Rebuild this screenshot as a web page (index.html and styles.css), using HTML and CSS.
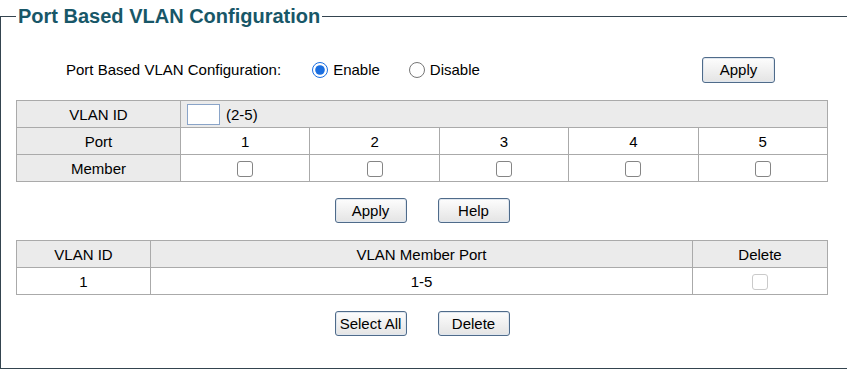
FILE: index.html
```html
<!DOCTYPE html>
<html lang="en">
<head>
  <meta charset="UTF-8" />
  <title>Port Based VLAN Configuration</title>
  <link rel="stylesheet" href="styles.css">
</head>
<body>
  <fieldset class="panel">
    <legend>Port Based VLAN Configuration</legend>

    <div class="config-row">
      <span class="config-label">Port Based VLAN Configuration:</span>
      <label class="radio"><input type="radio" name="state" checked> Enable</label>
      <label class="radio"><input type="radio" name="state"> Disable</label>
      <button type="button" class="btn apply-top">Apply</button>
    </div>

    <table class="grid member-table">
      <colgroup>
        <col style="width:164px"><col><col><col><col><col>
      </colgroup>
      <tr>
        <th>VLAN ID</th>
        <td colspan="5" class="id-cell"><input type="text" class="vid"><span class="hint">(2-5)</span></td>
      </tr>
      <tr>
        <th>Port</th>
        <td>1</td><td>2</td><td>3</td><td>4</td><td>5</td>
      </tr>
      <tr>
        <th>Member</th>
        <td><input type="checkbox" class="chk"></td>
        <td><input type="checkbox" class="chk"></td>
        <td><input type="checkbox" class="chk"></td>
        <td><input type="checkbox" class="chk"></td>
        <td><input type="checkbox" class="chk"></td>
      </tr>
    </table>

    <div class="btn-row">
      <button type="button" class="btn">Apply</button>
      <button type="button" class="btn">Help</button>
    </div>

    <table class="grid list-table">
      <colgroup>
        <col style="width:134px"><col><col style="width:135px">
      </colgroup>
      <tr><th>VLAN ID</th><th>VLAN Member Port</th><th>Delete</th></tr>
      <tr>
        <td>1</td>
        <td>1-5</td>
        <td><input type="checkbox" class="chk" disabled></td>
      </tr>
    </table>

    <div class="btn-row">
      <button type="button" class="btn">Select All</button>
      <button type="button" class="btn">Delete</button>
    </div>
  </fieldset>
</body>
</html>
```

FILE: styles.css
```css
body {
  margin: 0;
  font-family: 'Liberation Sans', Arial, sans-serif;
  font-size: 15px;
  color: #000;
  background: #fff;
}

.panel {
  margin: 5px 0 0 0;
  padding: 0 15px 32px 15px;
  border: 1px solid #34444f;
  border-right: none;
  min-width: 0;
}

.panel legend {
  padding: 0 2px;
  font-size: 20px;
  font-weight: bold;
  color: #185768;
}

.config-row {
  display: flex;
  align-items: center;
  height: 27px;
  margin-top: 28px;
  margin-bottom: 17px;
  padding-left: 50px;
  width: 709px;
}

.config-label {
  margin-right: 31px;
}

.radio {
  display: flex;
  align-items: center;
  gap: 5px;
  margin-right: 29px;
}

.radio input {
  width: 16px;
  height: 16px;
  margin: 0;
  accent-color: #1a6ee0;
}

.btn {
  width: 72px;
  height: 25px;
  padding: 0;
  font-family: 'Liberation Sans', Arial, sans-serif;
  font-size: 15px;
  color: #000;
  background: linear-gradient(#fdfdfd, #e4e4e4);
  border: 1px solid #4f6b8a;
  border-radius: 3px;
  box-shadow: inset 0 0 0 1px #dfe6ee;
  cursor: pointer;
}

.apply-top {
  margin-left: auto;
  width: 73px;
  height: 26px;
}

.grid {
  width: 812px;
  border-collapse: collapse;
  table-layout: fixed;
}

.grid th, .grid td {
  border: 1px solid #aaa;
  height: 26px;
  padding: 0;
  text-align: center;
  font-weight: normal;
}

.grid th {
  background: #ebebeb;
}

.grid .id-cell {
  text-align: left;
  padding-left: 6px;
  background: #ebebeb;
}

.vid {
  width: 33px;
  height: 21px;
  box-sizing: border-box;
  margin: 0 6px 0 0;
  border: 1px solid #8aa4c8;
  vertical-align: middle;
}

.hint {
  vertical-align: middle;
}

.chk {
  appearance: none;
  width: 16px;
  height: 16px;
  margin: 0;
  border: 1px solid #858585;
  border-radius: 3px;
  background: #fff;
  vertical-align: middle;
}

.chk:disabled {
  border-color: #cacaca;
}

.btn-row {
  display: flex;
  justify-content: center;
  gap: 31px;
  width: 812px;
  margin: 16px 0 17px 0;
}

.btn-row:last-child {
  margin-bottom: 0;
}
```
